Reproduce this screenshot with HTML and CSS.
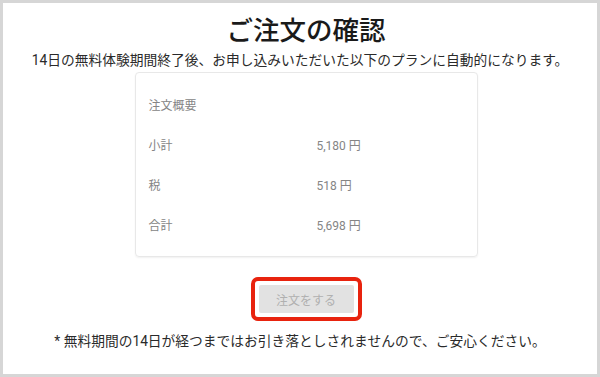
FILE: index.html
```html
<!DOCTYPE html>
<html lang="ja">
<head>
    <meta charset="UTF-8">
    <meta name="viewport" content="width=device-width, initial-scale=1.0">
    <title>ご注文の確認</title>
    <link rel="stylesheet" href="styles.css">
</head>
<body>
    <div class="frame">
        <h1 class="title">ご注文の確認</h1>
        <p class="lead">14日の無料体験期間終了後、お申し込みいただいた以下のプランに自動的になります。</p>

        <div class="summary">
            <div class="summary-head">注文概要</div>
            <div class="row">
                <span>小計</span>
                <span>5,180 円</span>
            </div>
            <div class="row">
                <span>税</span>
                <span>518 円</span>
            </div>
            <div class="row">
                <span>合計</span>
                <span>5,698 円</span>
            </div>
        </div>

        <div class="highlight">
            <button class="order-btn" disabled>注文をする</button>
        </div>

        <p class="note">* 無料期間の14日が経つまではお引き落としされませんので、ご安心ください。</p>
    </div>
</body>
</html>
```

FILE: styles.css
```css
body {
    margin: 0;
    padding: 0;
    background: #fff;
    font-family: Roboto, "Noto Sans CJK JP", sans-serif;
    color: #222;
}

.frame {
    width: 600px;
    height: 377px;
    box-sizing: border-box;
    border: 3px solid #d6d6d6;
    display: flex;
    flex-direction: column;
    align-items: center;
    padding-top: 12px;
}

.title {
    margin: 0 0 0 12px;
    font-size: 26.5px;
    line-height: 31px;
    font-weight: 500;
    color: #1a1a1a;
}

.lead {
    margin: 4px 0 0;
    font-size: 13.75px;
    line-height: 20px;
    color: #2a2a2a;
}

.summary {
    margin: 2px 0 0 12px;
    width: 343px;
    height: 185px;
    box-sizing: border-box;
    border: 1px solid #e8e8e8;
    border-radius: 4px;
    box-shadow: 0 1px 2px rgba(0, 0, 0, 0.06);
    padding: 13px 13px 0;
    color: #858585;
    font-size: 12px;
}

.summary-head,
.row {
    height: 40px;
    line-height: 40px;
}

.row {
    display: grid;
    grid-template-columns: 168px 1fr;
}

.highlight {
    margin: 20px 0 0 12px;
    border: 4px solid #e8230e;
    border-radius: 7px;
    padding: 4px;
}

.order-btn {
    display: block;
    width: 95px;
    height: 28px;
    border: none;
    border-radius: 2px;
    background: #e2e2e2;
    color: #b0b0b0;
    font-family: inherit;
    font-size: 12px;
}

.note {
    margin: 10px 0 0;
    font-size: 13.75px;
    line-height: 20px;
    color: #2a2a2a;
}
```
